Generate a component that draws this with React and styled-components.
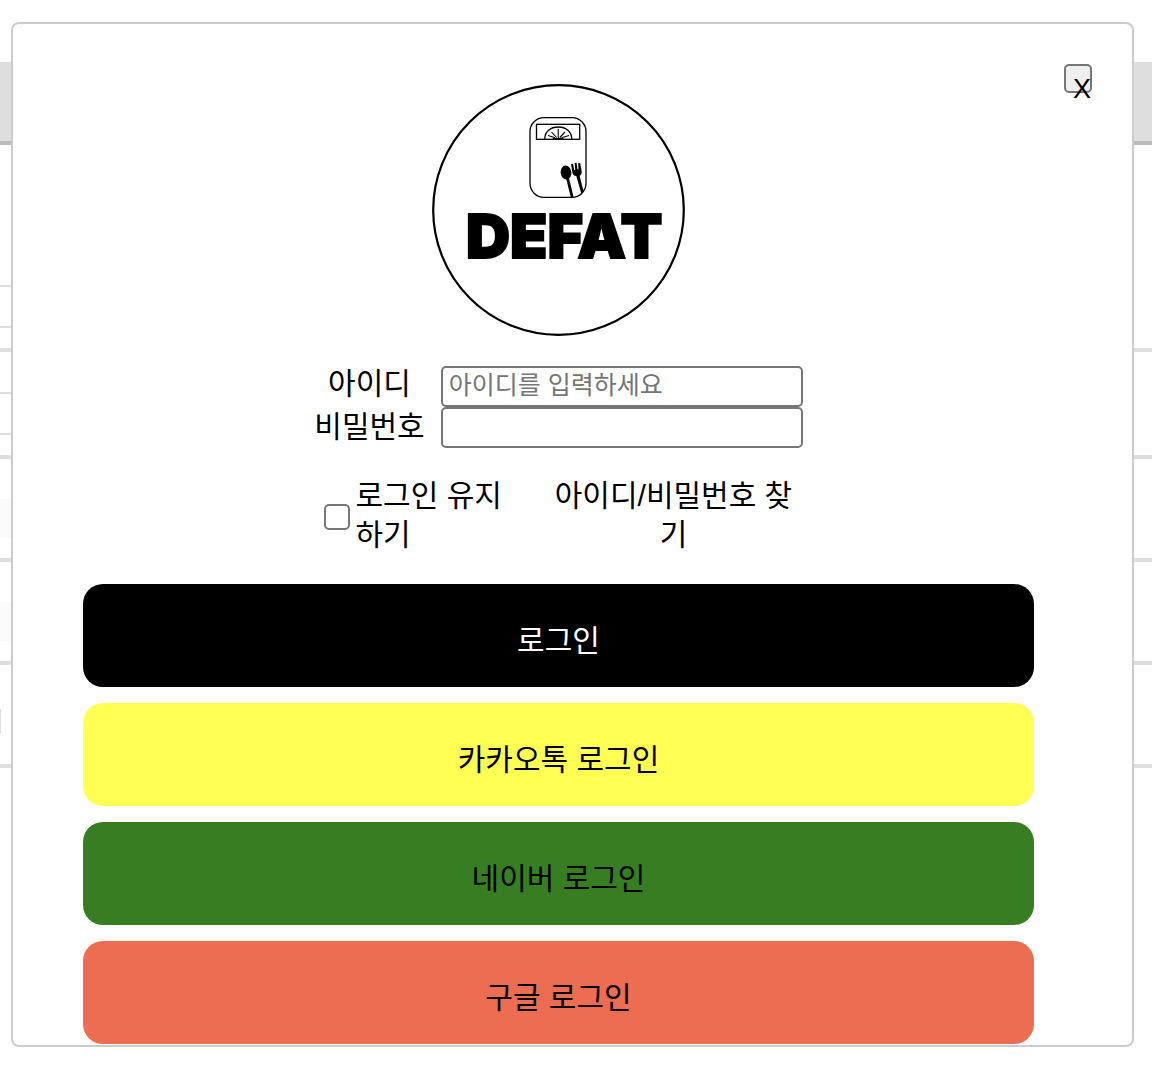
import React from "react";
import styled, { createGlobalStyle } from "styled-components";

const GlobalStyle = createGlobalStyle`
  * {
    box-sizing: border-box;
  }

  body {
    margin: 0;
    background: #fff;
    color: #000;
    font-family: "Liberation Sans", "Noto Sans CJK KR", sans-serif;
    font-size: 30px;
  }
`;

const Page = styled.main`
  padding-top: 62px;
  min-height: 100vh;
`;

const Banner = styled.div`
  height: 83px;
  margin-bottom: 100px;
  background: #dedede;
  border-bottom: 4px solid #bbb;
`;

const Row = styled.div`
  padding: 40px 0 20px;
  border-bottom: 4px solid #dedede;
`;

const Field = styled.div`
  width: 50%;
  height: 43px;
  border: 2px solid #dedede;
  border-left: 0;
`;

const Band = styled.div`
  width: 50%;
  height: 39px;
  background: #fafafa;
`;

const Tick = styled.div`
  width: 1px;
  height: 24px;
  margin: 4px 0 11px;
  background: #dedede;
`;

const Modal = styled.section`
  position: absolute;
  top: 22px;
  left: 11px;
  right: 18px;
  display: flex;
  flex-direction: column;
  align-items: center;
  padding: 60px 98px 1px 70px;
  background: #fff;
  border: 2px solid #ccc;
  border-radius: 8px;
`;

const CloseButton = styled.button`
  position: absolute;
  top: 40px;
  right: 40px;
  width: 28px;
  height: 29px;
  padding: 8px 0 0 7px;
  border: 2px solid #767676;
  border-radius: 5px;
  background: #efefef;
  color: #000;
  font-family: "Liberation Sans", sans-serif;
  font-size: 27px;
  line-height: 30px;
`;

const Logo = styled.svg`
  display: block;
  width: 253px;
  height: 252px;
  margin-bottom: 26px;
`;

const LogoText = styled.text`
  font-family: Inter, sans-serif;
  font-size: 61px;
  font-weight: 900;
`;

const Form = styled.form`
  display: flex;
  flex-direction: column;
  align-items: center;
  width: 100%;
`;

const Credentials = styled.div`
  display: flex;
  align-items: flex-end;
  gap: 16px;
  margin-bottom: 28px;
`;

const Stack = styled.div`
  display: flex;
  flex-direction: column;
  text-align: center;
`;

const FieldLabel = styled.label`
  line-height: 43px;
`;

const TextInput = styled.input`
  width: 362px;
  height: 41px;
  padding: 0 6px 2px;
  border: 2px solid #767676;
  border-radius: 5px;
  background: #fff;
  font-family: inherit;
  font-size: 25px;

  &::placeholder {
    color: #757575;
    opacity: 1;
  }
`;

const Options = styled.div`
  display: flex;
  align-items: center;
  justify-content: space-between;
  width: 490px;
  padding-left: 10px;
  margin-bottom: 30px;
  line-height: 39px;
`;

const Remember = styled.label`
  display: flex;
  align-items: center;
  gap: 6px;
  width: 188px;
`;

const Checkbox = styled.input`
  appearance: none;
  flex: none;
  width: 26px;
  height: 26px;
  margin: 4px 0 0;
  border: 2px solid #767676;
  border-radius: 5px;
  background: #fff;
`;

const FindLink = styled.a`
  width: 260px;
  color: inherit;
  text-align: center;
  text-decoration: none;
`;

const Buttons = styled.div`
  display: flex;
  flex-direction: column;
  gap: 16px;
  width: 100%;
`;

const LoginButton = styled.button`
  width: 100%;
  padding: 35px 0 25px;
  border: 0;
  border-radius: 20px;
  background: ${(p) => p.$bg};
  color: ${(p) => p.$color || "#000"};
  font-family: inherit;
  font-size: 30px;
  line-height: 43px;
`;

function DefatLogo() {
  return (
    <Logo viewBox="0 0 253 252" role="img" aria-label="DEFAT">
      <ellipse cx="126.5" cy="126" rx="125.3" ry="124.8" fill="none" stroke="#000" strokeWidth="2.2" />
      <g fill="none" stroke="#000" strokeWidth="1.3">
        <rect x="98" y="33.7" width="56" height="79.6" rx="14" />
        <rect x="104.5" y="40.3" width="43.2" height="15" />
        <path d="M112.7 55.3C112.700 47.500 118.500 43 126.200 43S139.800 47.500 139.800 55.300" />
        <path strokeWidth="1.1" d="M126.200 54V45M124.600 53.500L119.500 48M127.800 53.500L133 48M123 53.800L116 51.500M129.500 53.800L137 51.500M121 54.500H131.500" />
      </g>
      <ellipse cx="134" cy="88.500" rx="5.400" ry="7" transform="rotate(-6 134 88.500)" />
      <path d="M134 94L136.800 93.500L141.500 112.700L138.800 113.200Z" />
      <path d="M139 80L141 79.700L142.200 86L143.200 85.800L142.700 79L144.600 78.800L145.500 85.400L146.500 85.200L146.200 79L148.200 79.200L149.700 87.500C149.900 90 148.900 91.200 147.600 91.700L151.600 107.500L149.400 109.700L144.300 92C142.400 91.800 141 91 140.500 89Z" />
      <LogoText x="34" y="174" stroke="#000" strokeWidth="2">DEFAT</LogoText>
    </Logo>
  );
}

export default function App() {
  return (
    <>
      <GlobalStyle />
      <Page>
        <Banner />
        <Row><Field /></Row>
        <Row><Field /></Row>
        <Row><Band /></Row>
        <Row><Band /></Row>
        <Row><Tick /></Row>
      </Page>
      <Modal role="dialog" aria-label="로그인">
        <CloseButton type="button">X</CloseButton>
        <DefatLogo />
        <Form onSubmit={(e) => e.preventDefault()}>
          <Credentials>
            <Stack>
              <FieldLabel htmlFor="user-id">아이디</FieldLabel>
              <FieldLabel htmlFor="user-password">비밀번호</FieldLabel>
            </Stack>
            <Stack>
              <TextInput id="user-id" type="text" placeholder="아이디를 입력하세요" />
              <TextInput id="user-password" type="password" />
            </Stack>
          </Credentials>
          <Options>
            <Remember>
              <Checkbox type="checkbox" />
              <span>로그인 유지하기</span>
            </Remember>
            <FindLink href="#find">아이디/비밀번호 찾기</FindLink>
          </Options>
          <Buttons>
            <LoginButton type="submit" $bg="#000" $color="#fff">로그인</LoginButton>
            <LoginButton type="button" $bg="#ffff54">카카오톡 로그인</LoginButton>
            <LoginButton type="button" $bg="#377e22">네이버 로그인</LoginButton>
            <LoginButton type="button" $bg="#ed6d52">구글 로그인</LoginButton>
          </Buttons>
        </Form>
      </Modal>
    </>
  );
}
